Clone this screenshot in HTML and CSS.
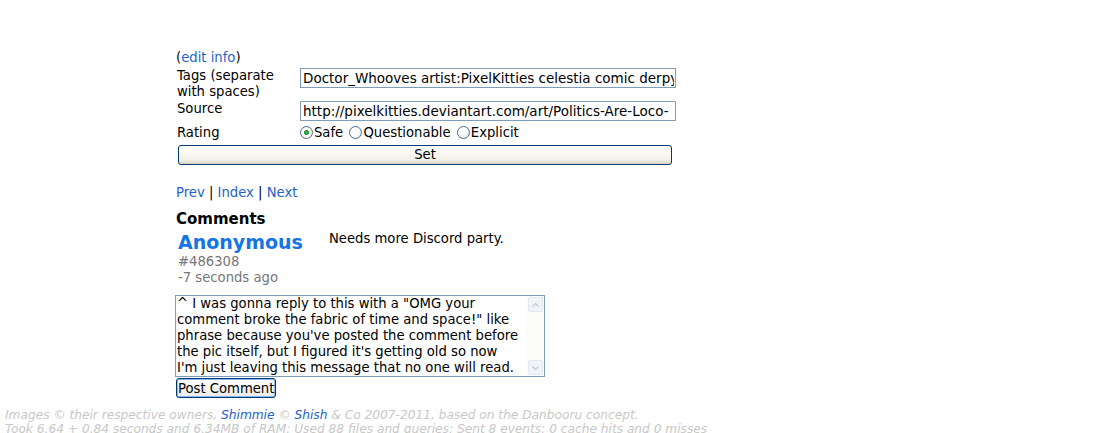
FILE: index.html
```html
<!DOCTYPE html>
<html lang="en">
<head>
    <meta charset="UTF-8">
    <title>Post</title>
    <link rel="stylesheet" href="styles.css">
</head>
<body>
    <div class="main">
        <form class="image-info">
            <div class="edit-link">(<a href="#">edit info</a>)</div>
            <table class="info-table">
                <tr>
                    <th>Tags (separate<br>with spaces)</th>
                    <td><input type="text" class="field" value="Doctor_Whooves artist:PixelKitties celestia comic derpy_hooves discord"></td>
                </tr>
                <tr>
                    <th>Source</th>
                    <td><input type="text" class="field" value="http://pixelkitties.deviantart.com/art/Politics-Are-Loco-"></td>
                </tr>
                <tr class="rating-row">
                    <th>Rating</th>
                    <td class="ratings">
                        <label><input type="radio" name="rating" checked>Safe</label>
                        <label><input type="radio" name="rating">Questionable</label>
                        <label><input type="radio" name="rating">Explicit</label>
                    </td>
                </tr>
                <tr>
                    <td colspan="2"><button type="button" class="set-button">Set</button></td>
                </tr>
            </table>
        </form>

        <div class="nav-links">
            <a href="#">Prev</a> | <a href="#">Index</a> | <a href="#">Next</a>
        </div>

        <h3 class="comments-title">Comments</h3>
        <div class="comment">
            <div class="comment-meta">
                <a href="#" class="username">Anonymous</a>
                <div class="comment-id">#486308</div>
                <div class="comment-time">-7 seconds ago</div>
            </div>
            <div class="comment-body">Needs more Discord party.</div>
        </div>

        <form class="comment-form">
            <div class="comment-box">
                <textarea>^ I was gonna reply to this with a "OMG your comment broke the fabric of time and space!" like phrase because you've posted the comment before the pic itself, but I figured it's getting old so now I'm just leaving this message that no one will read.</textarea>
                <div class="scrollbar">
                    <span class="scroll-arrow">
                        <svg width="7" height="4" viewBox="0 0 7 4"><path d="M0.5 3.5 L3.5 0.5 L6.5 3.5" fill="none" stroke="#c3cbd8" stroke-width="1.2"/></svg>
                    </span>
                    <span class="scroll-arrow">
                        <svg width="7" height="4" viewBox="0 0 7 4"><path d="M0.5 0.5 L3.5 3.5 L6.5 0.5" fill="none" stroke="#c3cbd8" stroke-width="1.2"/></svg>
                    </span>
                </div>
            </div>
            <button type="button" class="post-button">Post Comment</button>
        </form>
    </div>

    <div class="footer">
        Images &copy; their respective owners, <a href="#">Shimmie</a> &copy; <a href="#">Shish</a> &amp; Co 2007-2011, based on the Danbooru concept.<br>
        Took 6.64 + 0.84 seconds and 6.34MB of RAM: Used 88 files and queries: Sent 8 events: 0 cache hits and 0 misses
    </div>
</body>
</html>
```

FILE: styles.css
```css
body {
    margin: 0;
    padding: 0;
    background-color: #ffffff;
    color: #000;
    font-family: "DejaVu Sans", Verdana, sans-serif;
    font-size: 13.2px;
}

a {
    color: #1e63c8;
    text-decoration: none;
}

.main {
    margin-left: 176px;
    padding-top: 50px;
    width: 500px;
}

.edit-link {
    line-height: 16px;
}

.info-table {
    border-collapse: collapse;
    margin-top: 1px;
}

.info-table th {
    font-weight: normal;
    text-align: left;
    vertical-align: top;
    width: 124px;
    padding: 1px 2px 0 1px;
    line-height: 16px;
}

.info-table td {
    padding: 1px 0;
    vertical-align: top;
}

.info-table .rating-row th,
.info-table .rating-row td {
    padding-top: 3px;
}

.field {
    display: block;
    box-sizing: border-box;
    width: 376px;
    height: 20px;
    margin: 0;
    border: 1px solid #7f9db9;
    padding: 0 1px 0 2px;
    font-family: "DejaVu Sans", Verdana, sans-serif;
    font-size: 13.5px;
    color: #000;
}

.ratings {
    line-height: 16px;
    height: 16px;
}

.ratings label {
    margin-right: 2px;
}

.ratings input {
    appearance: none;
    box-sizing: border-box;
    margin: 0 1px 0 0;
    width: 13px;
    height: 13px;
    vertical-align: -2px;
    border: 1px solid #4e6f8f;
    border-radius: 50%;
    background: radial-gradient(circle at 40% 40%, #ffffff 40%, #dedbd2);
}

.ratings input:checked {
    background: radial-gradient(circle, #3fb34a 0, #2c9a37 2.2px, #ffffff 2.8px, #ffffff 3.6px, #dedbd2);
}

.set-button {
    display: block;
    box-sizing: border-box;
    width: 494px;
    height: 20px;
    margin: 2px 0 0 2px;
    border: 1px solid #003c74;
    border-radius: 3px;
    background: linear-gradient(#ffffff, #f3f1e8 75%, #d9d3c3);
    font-family: "DejaVu Sans", Verdana, sans-serif;
    font-size: 13.2px;
    line-height: 16px;
    padding: 0;
}

.nav-links {
    margin-top: 19px;
    line-height: 16px;
}

.comments-title {
    margin: 8px 0 0;
    font-size: 15px;
    line-height: 20px;
}

.comment {
    display: flex;
    margin-top: 2px;
}

.comment-meta {
    width: 151px;
    padding-left: 2px;
}

.username {
    display: block;
    font-size: 19px;
    font-weight: bold;
    color: #1574e6;
    line-height: 23px;
}

.comment-id,
.comment-time {
    color: #777;
    line-height: 16px;
}

.comment-body {
    line-height: 16px;
}

.comment-form {
    margin-top: 9px;
}

.comment-box {
    display: flex;
    box-sizing: border-box;
    width: 370px;
    height: 82px;
    margin-left: -1px;
    border: 1px solid #7f9db9;
    background: #fff;
}

.comment-box textarea {
    box-sizing: border-box;
    width: 351px;
    border: none;
    outline: none;
    margin: 0;
    padding: 0 9px 0 1px;
    font-family: "DejaVu Sans", Verdana, sans-serif;
    font-size: 13.2px;
    line-height: 16px;
    resize: none;
    overflow: hidden;
}

.scrollbar {
    width: 17px;
    display: flex;
    flex-direction: column;
    justify-content: space-between;
    background: #fbfbf9;
}

.scroll-arrow {
    display: flex;
    align-items: center;
    justify-content: center;
    height: 15px;
    margin: 1px;
    border: 1px solid #e3e8f1;
    border-radius: 2px;
    background: #f1f3f6;
    box-sizing: border-box;
}

.post-button {
    display: block;
    margin: 1px 0 0 0;
    height: 20px;
    padding: 0 1px;
    border: 1px solid #003c74;
    border-radius: 3px;
    background: linear-gradient(#ffffff, #ecebe6);
    box-shadow: inset 0 0 0 1px #8cb4f2;
    font-family: "DejaVu Sans", Verdana, sans-serif;
    font-size: 13.2px;
}

.footer {
    margin: 10px 0 0 5px;
    color: #c8c8c8;
    font-style: italic;
    font-size: 12.2px;
    line-height: 14px;
}

.footer a {
    color: #1e63c8;
}
```
